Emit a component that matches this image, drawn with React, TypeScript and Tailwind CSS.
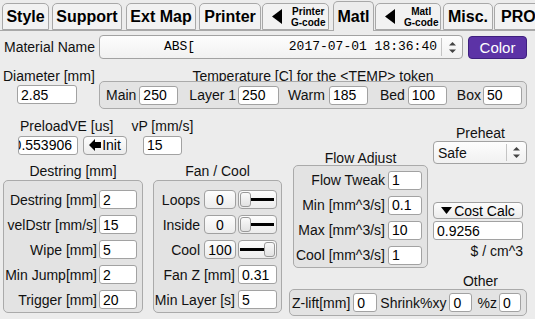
import React from 'react';

const label = 'text-[14px] leading-[16px] text-[#111] whitespace-nowrap';
const field =
  'h-[19px] bg-white border border-[#a2a2a2] rounded-[3px] px-[3px] text-[14px] leading-[16px] text-black flex items-center whitespace-nowrap overflow-hidden shrink-0';
const button =
  'bg-gradient-to-b from-[#fdfdfd] to-[#ececec] border border-[#a0a0a0] rounded-[4px] flex items-center justify-center text-[14px] leading-[16px] text-black whitespace-nowrap shrink-0';
const groupBox = 'border border-[#aaaaaa] rounded-[5px] bg-[#e3e3e3]';

const Field: React.FC<{ value: string; className?: string }> = ({ value, className = '' }) => (
  <div className={`${field} ${className}`}>{value}</div>
);

const TriLeft = () => (
  <svg width="10" height="15" viewBox="0 0 10 15" className="shrink-0">
    <polygon points="10,0 10,15 0,7.5" fill="#000" />
  </svg>
);

const SpinArrows = () => (
  <svg width="7" height="11" viewBox="0 0 7 11">
    <polygon points="3.5,0 7,3.5 0,3.5" fill="#444" />
    <polygon points="0,7.5 7,7.5 3.5,11" fill="#444" />
  </svg>
);

interface TabProps {
  children: React.ReactNode;
  className?: string;
  active?: boolean;
}

const Tab: React.FC<TabProps> = ({ children, className = '', active }) => (
  <div
    className={`shrink-0 flex items-center justify-center border border-[#a8a8a8] rounded-t-[5px] font-bold text-[16px] leading-[18px] text-black ${
      active ? 'relative z-10 h-[30px] -mb-px border-b-0 bg-[#ececec]' : 'h-[27px] bg-[#f2f2f2]'
    } ${className}`}
  >
    {children}
  </div>
);

const GcodeTab: React.FC<{ top: string; className: string; gap: string }> = ({ top, className, gap }) => (
  <Tab className={`justify-start pl-[9px] ${className}`}>
    <TriLeft />
    <div className={`flex flex-col items-center text-[10px] leading-[11px] ${gap}`}>
      <span>{top}</span>
      <span>G-code</span>
    </div>
  </Tab>
);

const Slider: React.FC<{ right?: boolean }> = ({ right }) => (
  <div className="ml-[2px] w-[39px] h-[19px] border border-[#a0a0a0] rounded-[4px] bg-gradient-to-b from-[#fdfdfd] to-[#ececec] flex items-center px-[1px] shrink-0">
    {right && <div className="flex-1 h-[3px] bg-black" />}
    <div className="w-[11px] h-[15px] border border-[#999] rounded-[3px] bg-gradient-to-b from-[#fafafa] to-[#e2e2e2]" />
    {!right && <div className="flex-1 h-[3px] bg-black mr-[1px]" />}
  </div>
);

const destring = [
  ['Destring [mm]', '2'],
  ['velDstr [mm/s]', '15'],
  ['Wipe [mm]', '5'],
  ['Min Jump[mm]', '2'],
  ['Trigger [mm]', '20'],
];

const fanSliders: [string, string, boolean][] = [
  ['Loops', '0', false],
  ['Inside', '0', false],
  ['Cool', '100', true],
];

const flow = [
  ['Flow Tweak', '1'],
  ['Min [mm^3/s]', '0.1'],
  ['Max [mm^3/s]', '10'],
  ['Cool [mm^3/s]', '1'],
];

export default function App() {
  return (
    <div className="w-[535px] h-[319px] overflow-hidden bg-[#ececec] font-['Liberation_Sans',Arial,sans-serif] text-black">
      {/* tabs */}
      <div className="flex items-end h-[31px] border-b border-[#a8a8a8]">
        <Tab className="ml-[2px] w-[47px]">Style</Tab>
        <Tab className="ml-[3px] w-[70px]">Support</Tab>
        <Tab className="ml-[4px] w-[70px]">Ext Map</Tab>
        <Tab className="ml-[3px] w-[62px]">Printer</Tab>
        <GcodeTab top="Printer" className="ml-[1px] w-[67px]" gap="ml-[9px]" />
        <Tab active className="ml-[4px] w-[41px]">Matl</Tab>
        <GcodeTab top="Matl" className="ml-[1px] w-[66px]" gap="ml-[9px]" />
        <Tab className="ml-[2px] w-[50px]">Misc.</Tab>
        <Tab className="ml-[1px] w-[50px] justify-start pl-[6px]">PRO</Tab>
      </div>

      {/* material name */}
      <div className="flex items-center mt-[4px] h-[24px]">
        <div className={`${label} w-[99px] pl-[4px]`}>Material Name</div>
        <div className="w-[364px] h-[24px] border border-[#a2a2a2] rounded-[4px] bg-gradient-to-b from-[#fdfdfd] to-[#f1f1f1] flex items-center">
          <div className="flex-1 text-right pr-[4px] whitespace-pre font-['Liberation_Mono',monospace] text-[13px] leading-[16px]">
            {'ABS[            2017-07-01 18:36:40'}
          </div>
          <div className="w-px h-[18px] bg-[#c4c4c4]" />
          <div className="w-[20px] flex justify-center">
            <SpinArrows />
          </div>
        </div>
        <div className="ml-[5px] w-[59px] h-[23px] rounded-[4px] bg-[#5c33a6] border border-[#3e1f7e] text-white text-[15px] leading-[17px] flex items-center justify-center">
          Color
        </div>
      </div>

      {/* diameter + temperature */}
      <div className="flex mt-[9px]">
        <div className="w-[99px] flex flex-col">
          <div className={`${label} pl-[3px]`}>Diameter [mm]</div>
          <Field value="2.85" className="ml-[17px] mt-[1px] w-[60px]" />
        </div>
        <div className="w-[428px] flex flex-col">
          <div className={`${label} text-center`}>Temperature [C] for the &lt;TEMP&gt; token</div>
          <div className={`${groupBox} -mt-[3px] h-[28px] flex items-center pl-[6px]`}>
            <span className={label}>Main</span>
            <Field value="250" className="ml-[3px] w-[39px]" />
            <span className={`${label} ml-[11px]`}>Layer 1</span>
            <Field value="250" className="ml-[2px] w-[41px]" />
            <span className={`${label} ml-[9px]`}>Warm</span>
            <Field value="185" className="ml-[4px] w-[39px]" />
            <span className={`${label} ml-[12px]`}>Bed</span>
            <Field value="100" className="ml-[3px] w-[39px]" />
            <span className={`${label} ml-[10px]`}>Box</span>
            <Field value="50" className="ml-[2px] w-[39px]" />
          </div>
        </div>
      </div>

      {/* lower area */}
      <div className="flex">
        {/* left part */}
        <div className="w-[285px] shrink-0 flex flex-col">
          <div className="flex mt-[9px]">
            <span className={`${label} ml-[20px]`}>PreloadVE [us]</span>
            <span className={`${label} ml-[18px]`}>vP [mm/s]</span>
          </div>
          <div className="flex items-center mt-[1px] h-[20px]">
            <div className={`${field} ml-[18px] w-[60px] h-[18px] justify-end pr-[5px]`}>0.553906</div>
            <div className={`${button} ml-[5px] w-[44px] h-[19px]`}>
              <svg width="12" height="12" viewBox="0 0 12 12" className="mr-[1px]">
                <polygon points="0,6 6,0 6,3 12,3 12,9 6,9 6,12" fill="#000" />
              </svg>
              Init
            </div>
            <Field value="15" className="ml-[16px] w-[39px] h-[18px]" />
          </div>

          <div className="flex mt-[8px]">
            {/* destring */}
            <div className="ml-[3px] w-[140px] flex flex-col">
              <div className={`${label} text-center`}>Destring [mm]</div>
              <div className={`${groupBox} mt-[1px] h-[133px] pt-[9px] flex flex-col gap-[6px]`}>
                {destring.map(([l, v]) => (
                  <div key={l} className="flex items-center h-[19px]">
                    <div className={`${label} w-[93px] flex justify-end`}>{l}</div>
                    <Field value={v} className="ml-[2px] w-[38px]" />
                  </div>
                ))}
              </div>
            </div>

            {/* fan / cool */}
            <div className="ml-[10px] w-[129px] flex flex-col">
              <div className={`${label} text-center`}>Fan / Cool</div>
              <div className={`${groupBox} mt-[1px] h-[133px] pt-[9px] flex flex-col gap-[6px]`}>
                {fanSliders.map(([l, v, r]) => (
                  <div key={l} className="flex items-center h-[19px]">
                    <div className={`${label} w-[46px] flex justify-end`}>{l}</div>
                    <div className={`${button} ml-[4px] w-[32px] h-[19px]`}>{v}</div>
                    <Slider right={r} />
                  </div>
                ))}
                <div className="flex items-center h-[19px]">
                  <div className={`${label} w-[81px] flex justify-end`}>Fan Z [mm]</div>
                  <Field value="0.31" className="ml-[3px] w-[39px]" />
                </div>
                <div className="flex items-center h-[19px]">
                  <div className={`${label} w-[81px] flex justify-end`}>Min Layer [s]</div>
                  <Field value="5" className="ml-[3px] w-[39px]" />
                </div>
              </div>
            </div>
          </div>
        </div>

        {/* right part */}
        <div className="w-[250px] shrink-0 flex flex-col">
          <div className="flex">
            {/* flow adjust */}
            <div className="ml-[8px] w-[135px] flex flex-col mt-[41px]">
              <div className={`${label} text-center`}>Flow Adjust</div>
              <div className={`${groupBox} -mt-px h-[103px] pt-[5px] flex flex-col gap-[7px]`}>
                {flow.map(([l, v]) => (
                  <div key={l} className="flex items-center h-[18px]">
                    <div className={`${label} w-[91px] flex justify-end`}>{l}</div>
                    <Field value={v} className="ml-[3px] w-[34px] h-[18px]" />
                  </div>
                ))}
              </div>
            </div>

            {/* preheat / cost */}
            <div className="ml-[5px] w-[95px] flex flex-col mt-[16px]">
              <div className={`${label} text-center`}>Preheat</div>
              <div className="w-[94px] h-[23px] border border-[#a2a2a2] rounded-[4px] bg-gradient-to-b from-[#fdfdfd] to-[#f1f1f1] flex items-center">
                <span className={`${label} flex-1 pl-[4px]`}>Safe</span>
                <div className="w-px h-[17px] bg-[#c4c4c4]" />
                <div className="w-[19px] flex justify-center">
                  <SpinArrows />
                </div>
              </div>
              <div className={`${button} mt-[38px] w-[90px] h-[17px]`}>
                <svg width="11" height="7" viewBox="0 0 11 7" className="mr-[2px]">
                  <polygon points="0,0 11,0 5.5,7" fill="#000" />
                </svg>
                Cost Calc
              </div>
              <Field value="0.9256" className="mt-[2px] w-[90px] h-[17px]" />
              <div className={`${label} mt-[3px] w-[90px] text-right`}>$ / cm^3</div>
              <div className={`${label} mt-[14px] text-center`}>Other</div>
            </div>
          </div>

          {/* other */}
          <div className={`${groupBox} ml-[4px] w-[238px] h-[27px] flex items-center pl-[2px]`}>
            <span className={label}>Z-lift[mm]</span>
            <Field value="0" className="ml-[3px] w-[24px] h-[18px]" />
            <span className={`${label} ml-[3px]`}>Shrink%xy</span>
            <Field value="0" className="ml-[3px] w-[23px] h-[18px]" />
            <span className={`${label} ml-[5px]`}>%z</span>
            <Field value="0" className="ml-[2px] w-[22px] h-[18px]" />
          </div>
        </div>
      </div>
    </div>
  );
}
